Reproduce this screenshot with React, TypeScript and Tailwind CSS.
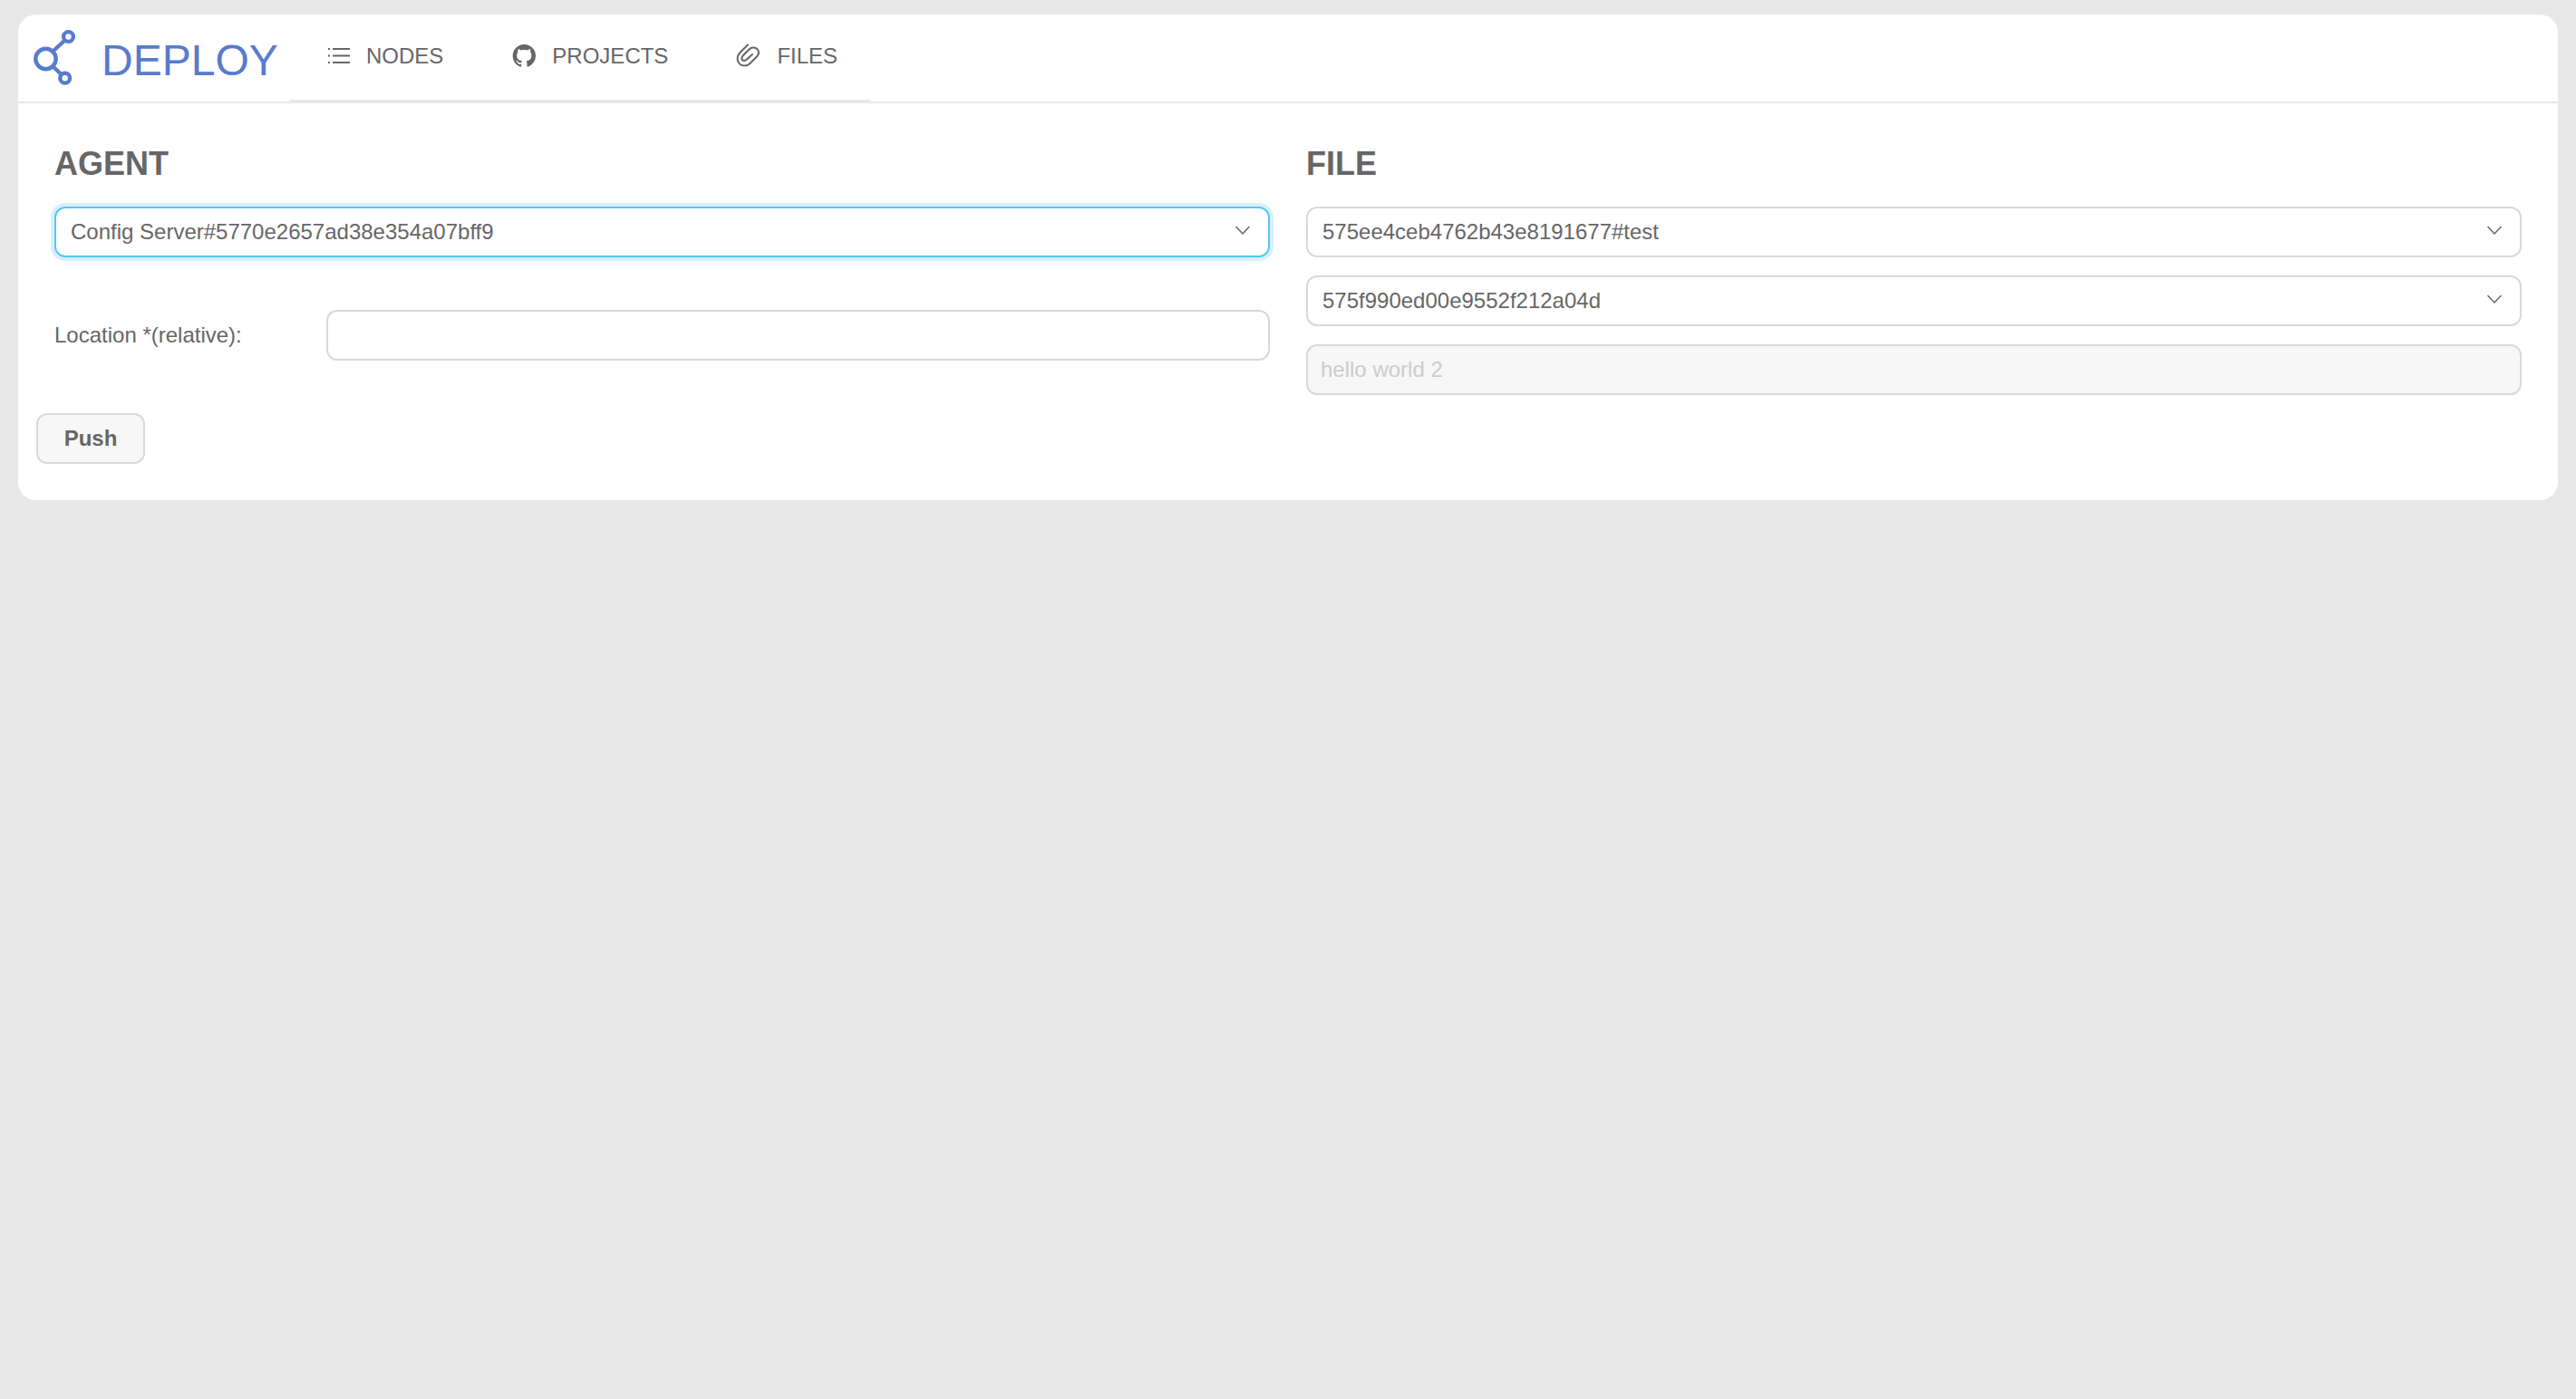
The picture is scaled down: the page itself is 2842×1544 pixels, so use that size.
import { useState, type ReactNode } from "react";

const fieldClass = "block h-14 w-full rounded-xl border-2 bg-white text-2xl text-[#666] outline-none";

function LogoIcon() {
  return (
    <svg viewBox="0 0 64 72" className="h-[72px] w-16" fill="none" stroke="#587bcd" strokeWidth="4.4" aria-hidden="true">
      <circle cx="20.5" cy="39" r="11.2" />
      <circle cx="45.5" cy="14.5" r="5.4" />
      <circle cx="41.7" cy="60.2" r="5.4" />
      <path d="M28.5 30.5 41.5 18.5M28.5 47.5 37.5 56" />
    </svg>
  );
}

function ListIcon() {
  return (
    <svg viewBox="0 0 26 26" className="h-[26px] w-[26px]" fill="#666" aria-hidden="true">
      <path d="M2 4h2v2H2zM7 4h19v2H7zM2 11.5h2v2H2zM7 11.5h19v2H7zM2 19h2v2H2zM7 19h19v2H7z" />
    </svg>
  );
}

function GithubIcon() {
  return (
    <svg viewBox="-0.4 0 16.4 16.4" className="h-[26px] w-[26px]" fill="#666" aria-hidden="true">
      <path d="M8 0C3.58 0 0 3.58 0 8c0 3.54 2.29 6.53 5.47 7.59.4.07.55-.17.55-.38 0-.19-.01-.82-.01-1.49-2.01.37-2.53-.49-2.69-.94-.09-.23-.48-.94-.82-1.13-.28-.15-.68-.52-.01-.53.63-.01 1.08.58 1.23.82.72 1.21 1.87.87 2.33.66.07-.52.28-.87.51-1.07-1.78-.2-3.64-.89-3.64-3.95 0-.87.31-1.59.82-2.15-.08-.2-.36-1.02.08-2.12 0 0 .67-.21 2.2.82.64-.18 1.32-.27 2-.27s1.36.09 2 .27c1.53-1.04 2.2-.82 2.2-.82.44 1.1.16 1.92.08 2.12.51.56.82 1.27.82 2.15 0 3.07-1.87 3.75-3.65 3.95.29.25.54.73.54 1.48 0 1.07-.01 1.93-.01 2.2 0 .21.15.46.55.38A8.01 8.01 0 0 0 16 8c0-4.42-3.58-8-8-8z" />
    </svg>
  );
}

function ClipIcon() {
  return (
    <svg
      viewBox="0 0 26 26"
      className="h-[26px] w-[26px] overflow-visible"
      fill="none"
      stroke="#666"
      strokeWidth="2"
      strokeLinecap="round"
      aria-hidden="true"
    >
      <path d="M12 .5 3.5 9C-2 15 1 23.5 8.500 23.5c3 0 4.500-1 6-2.500l7-7C26.500 9 23 3.500 18 3.500c-2 0-3.500 1-4.500 2L7 12c-3 3-1.500 6 1 6 1.500 0 2.500-1 3.500-2l5.500-5" />
    </svg>
  );
}

function NavItem({ icon, children }: { icon: ReactNode; children: ReactNode }) {
  return (
    <a href="#" className="flex h-[92px] items-center gap-[18px] pl-10 pr-9 text-2xl text-[#666]">
      {icon}
      <span>{children}</span>
    </a>
  );
}

function SelectField({ label, value, focused }: { label: string; value: string; focused?: boolean }) {
  return (
    <div className="relative">
      <select
        aria-label={label}
        defaultValue={value}
        className={`${fieldClass} appearance-none pl-4 pr-16 ${
          focused ? "border-[#57c5f7] ring-4 ring-[#d5f1fd]" : "border-[#d9d9d9]"
        }`}
      >
        <option>{value}</option>
      </select>
      <svg
        viewBox="0 0 16 12"
        className="pointer-events-none absolute right-[22px] top-5 h-3 w-4"
        fill="none"
        stroke="#666"
        strokeWidth="1.5"
        aria-hidden="true"
      >
        <path d="M.5 2 8 10l7.5-8" />
      </svg>
    </div>
  );
}

export default function App() {
  const [location, setLocation] = useState("");
  return (
    <div className="min-h-screen bg-[#e8e8e8] px-5 pt-4 font-['Liberation_Sans',Arial,sans-serif] text-[#666]">
      <div className="rounded-[20px] bg-white pb-10">
        <header className="flex border-b-2 border-[#e8e8e8]">
          <a href="#" className="flex h-[92px] w-[300px] items-center pl-2.5 text-[#587bcd]">
            <LogoIcon />
            <span className="ml-[18px] pt-2.5 text-5xl leading-none">DEPLOY</span>
          </a>
          <nav className="flex border-b-2 border-[#e8e8e8] pb-0.5">
            <NavItem icon={<ListIcon />}>NODES</NavItem>
            <NavItem icon={<GithubIcon />}>PROJECTS</NavItem>
            <NavItem icon={<ClipIcon />}>FILES</NavItem>
          </nav>
        </header>
        <main>
          <div className="grid grid-cols-2 gap-10 px-10 pt-11">
            <section>
              <h2 className="mb-6 text-4xl leading-[46px] font-bold">AGENT</h2>
              <SelectField label="Agent" value="Config Server#5770e2657ad38e354a07bff9" focused />
              <div className="mt-[58px] flex items-center">
                <label htmlFor="location" className="w-[300px] text-2xl">
                  Location *(relative):
                </label>
                <div className="flex-1">
                  <input
                    id="location"
                    value={location}
                    onChange={(e) => setLocation(e.target.value)}
                    className={`${fieldClass} border-[#d9d9d9] px-3.5`}
                  />
                </div>
              </div>
            </section>
            <section>
              <h2 className="mb-6 text-4xl leading-[46px] font-bold">FILE</h2>
              <div className="flex flex-col gap-5">
                <SelectField label="File" value="575ee4ceb4762b43e8191677#test" />
                <SelectField label="Version" value="575f990ed00e9552f212a04d" />
                <input
                  aria-label="Description"
                  disabled
                  value="hello world 2"
                  className="block h-14 w-full rounded-xl border-2 border-[#d9d9d9] bg-[#f7f7f7] px-3.5 text-2xl text-[#ccc]"
                />
              </div>
            </section>
          </div>
          <button
            type="button"
            className="mt-5 ml-5 block h-14 min-w-[120px] rounded-xl border-2 border-[#d9d9d9] bg-[#f7f7f7] px-7 text-2xl leading-none font-bold"
          >
            Push
          </button>
        </main>
      </div>
    </div>
  );
}
